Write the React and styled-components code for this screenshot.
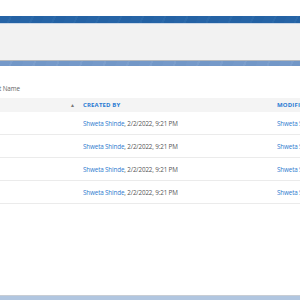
import React from "react";
import styled, { createGlobalStyle } from "styled-components";

const Global = createGlobalStyle`
  html, body { margin: 0; padding: 0; background: #fff; }
  body { width: 300px; height: 300px; overflow: hidden; font-family: "Open Sans", "Noto Sans", sans-serif; }
`;

const Page = styled.div`
  display: flex;
  flex-direction: column;
  height: 300px;
  width: 300px;
`;

const TopGap = styled.div`
  height: 16px;
`;

const Ribbon = styled.div`
  height: 7px;
  background: repeating-linear-gradient(115deg, #2664a6 0 9px, #2b69a9 9px 11px, #2462a4 11px 20px);
  border-bottom: 1px solid #c9d7e8;
`;

const Toolbar = styled.div`
  height: 36px;
  background: #f2f2f2;
  border-bottom: 1px solid #b4b8bd;
`;

const Accent = styled.div`
  height: 5px;
  background: repeating-linear-gradient(110deg, #7599c9 0 10px, #7b9ecc 10px 12px, #7297c7 12px 22px);
`;

const Content = styled.div`
  flex: 1;
  display: flex;
  flex-direction: column;
  padding-top: 18px;
`;

const FieldLabel = styled.div`
  font-size: 6.3px;
  color: #666;
  height: 10px;
  line-height: 10px;
  margin-bottom: 4px;
  margin-left: -1px;
  letter-spacing: -0.1px;
`;

const Table = styled.div`
  display: flex;
  flex-direction: column;
`;

const HeaderRow = styled.div`
  display: grid;
  grid-template-columns: 83px 194px 1fr;
  height: 14px;
  align-items: center;
  background: #f4f4f4;
`;

const SortCell = styled.div`
  display: flex;
  justify-content: flex-end;
  padding-right: 8px;
  color: #777;
  font-size: 5px;
`;

const HeadCell = styled.div`
  font-size: 6px;
  font-weight: 700;
  color: #2b7bd3;
  letter-spacing: 0.15px;
  white-space: nowrap;
  overflow: hidden;
`;

const Row = styled.div`
  display: grid;
  grid-template-columns: 83px 194px 1fr;
  height: 22px;
  align-items: center;
  border-bottom: 1px solid #ebebeb;
`;

const Cell = styled.div`
  font-size: 6.3px;
  letter-spacing: -0.15px;
  color: #555;
  white-space: nowrap;
  overflow: hidden;
`;

const Link = styled.span`
  color: #2f7bcf;
`;

const Spacer = styled.div`
  flex: 1;
`;

const Footer = styled.div`
  height: 4px;
  border-top: 1px solid #c8cdd4;
  background: #b1c6e0;
`;

const rows = [1, 2, 3, 4];

export default function App() {
  return (
    <>
      <Global />
      <Page>
        <TopGap />
        <Ribbon />
        <Toolbar />
        <Accent />
        <Content>
          <FieldLabel>t Name</FieldLabel>
          <Table>
            <HeaderRow>
              <SortCell>▲</SortCell>
              <HeadCell>CREATED BY</HeadCell>
              <HeadCell>MODIFIED BY</HeadCell>
            </HeaderRow>
            {rows.map((r) => (
              <Row key={r}>
                <Cell />
                <Cell>
                  <Link>Shweta Shinde</Link>, 2/2/2022, 9:21 PM
                </Cell>
                <Cell>
                  <Link>Shweta Shinde</Link>, 2/2/2022, 9:21 PM
                </Cell>
              </Row>
            ))}
          </Table>
          <Spacer />
        </Content>
        <Footer />
      </Page>
    </>
  );
}
